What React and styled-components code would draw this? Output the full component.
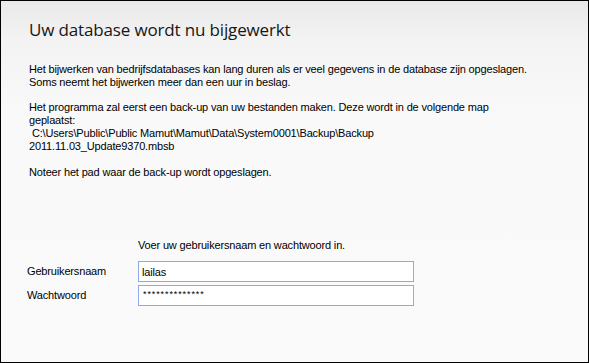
import React from "react";
import styled, { createGlobalStyle } from "styled-components";

const Global = createGlobalStyle`
  html, body { margin: 0; padding: 0; background: #fff; }
  * { box-sizing: border-box; }
`;

const Window = styled.div`
  width: 589px;
  height: 363px;
  border: 1px solid #000;
  background: linear-gradient(180deg, #e9e9e9 0px, #f3f3f3 40px, #f9f9f9 110px, #fafafa 100%);
  padding: 17px 0 0 28px;
  font-family: "Liberation Sans", Arial, sans-serif;
  font-size: 11px;
  letter-spacing: -0.16px;
  color: #000;
  overflow: hidden;
`;

const Title = styled.h1`
  margin: 0;
  font-family: "Open Sans", "Noto Sans", sans-serif;
  font-weight: 400;
  font-size: 17px;
  line-height: 24px;
  color: #161616;
  letter-spacing: -0.15px;
`;

const Para = styled.p`
  margin: ${(p) => p.$top}px 0 0 0;
  line-height: 13px;
  white-space: pre-wrap;
`;

const Form = styled.div`
  margin-top: 60px;
  margin-left: -2px;
  display: grid;
  grid-template-columns: 111px 276px;
  row-gap: 3px;
  align-items: center;
`;

const Prompt = styled.div`
  grid-column: 2;
  line-height: 13px;
  margin-bottom: 6px;
`;

const Label = styled.div`
  grid-column: 1;
  line-height: 13px;
`;

const Field = styled.input`
  grid-column: 2;
  height: 21px;
  width: 276px;
  border: 1px solid #8eaaea;
  background: #fff;
  padding: ${(p) => (p.$secret ? "0 0 3px 4px" : "0 0 0 3px")};
  margin: 0;
  font-family: "Liberation Sans", Arial, sans-serif;
  font-size: ${(p) => (p.$secret ? "9px" : "11px")};
  letter-spacing: ${(p) => (p.$secret ? "0.9px" : "-0.16px")};
  color: #000;
  outline: none;
`;

export default function App() {
  return (
    <>
      <Global />
      <Window>
        <Title>Uw database wordt nu bijgewerkt</Title>
        <Para $top={21}>
          {"Het bijwerken van bedrijfsdatabases kan lang duren als er veel gegevens in de database zijn opgeslagen.\nSoms neemt het bijwerken meer dan een uur in beslag."}
        </Para>
        <Para $top={12}>
          {"Het programma zal eerst een back-up van uw bestanden maken. Deze wordt in de volgende map\ngeplaatst:\n C:\\Users\\Public\\Public Mamut\\Mamut\\Data\\System0001\\Backup\\Backup\n2011.11.03_Update9370.mbsb"}
        </Para>
        <Para $top={13}>Noteer het pad waar de back-up wordt opgeslagen.</Para>
        <Form>
          <Prompt>Voer uw gebruikersnaam en wachtwoord in.</Prompt>
          <Label>Gebruikersnaam</Label>
          <Field readOnly value="lailas" />
          <Label>Wachtwoord</Label>
          <Field $secret readOnly value="**************" />
        </Form>
      </Window>
    </>
  );
}
